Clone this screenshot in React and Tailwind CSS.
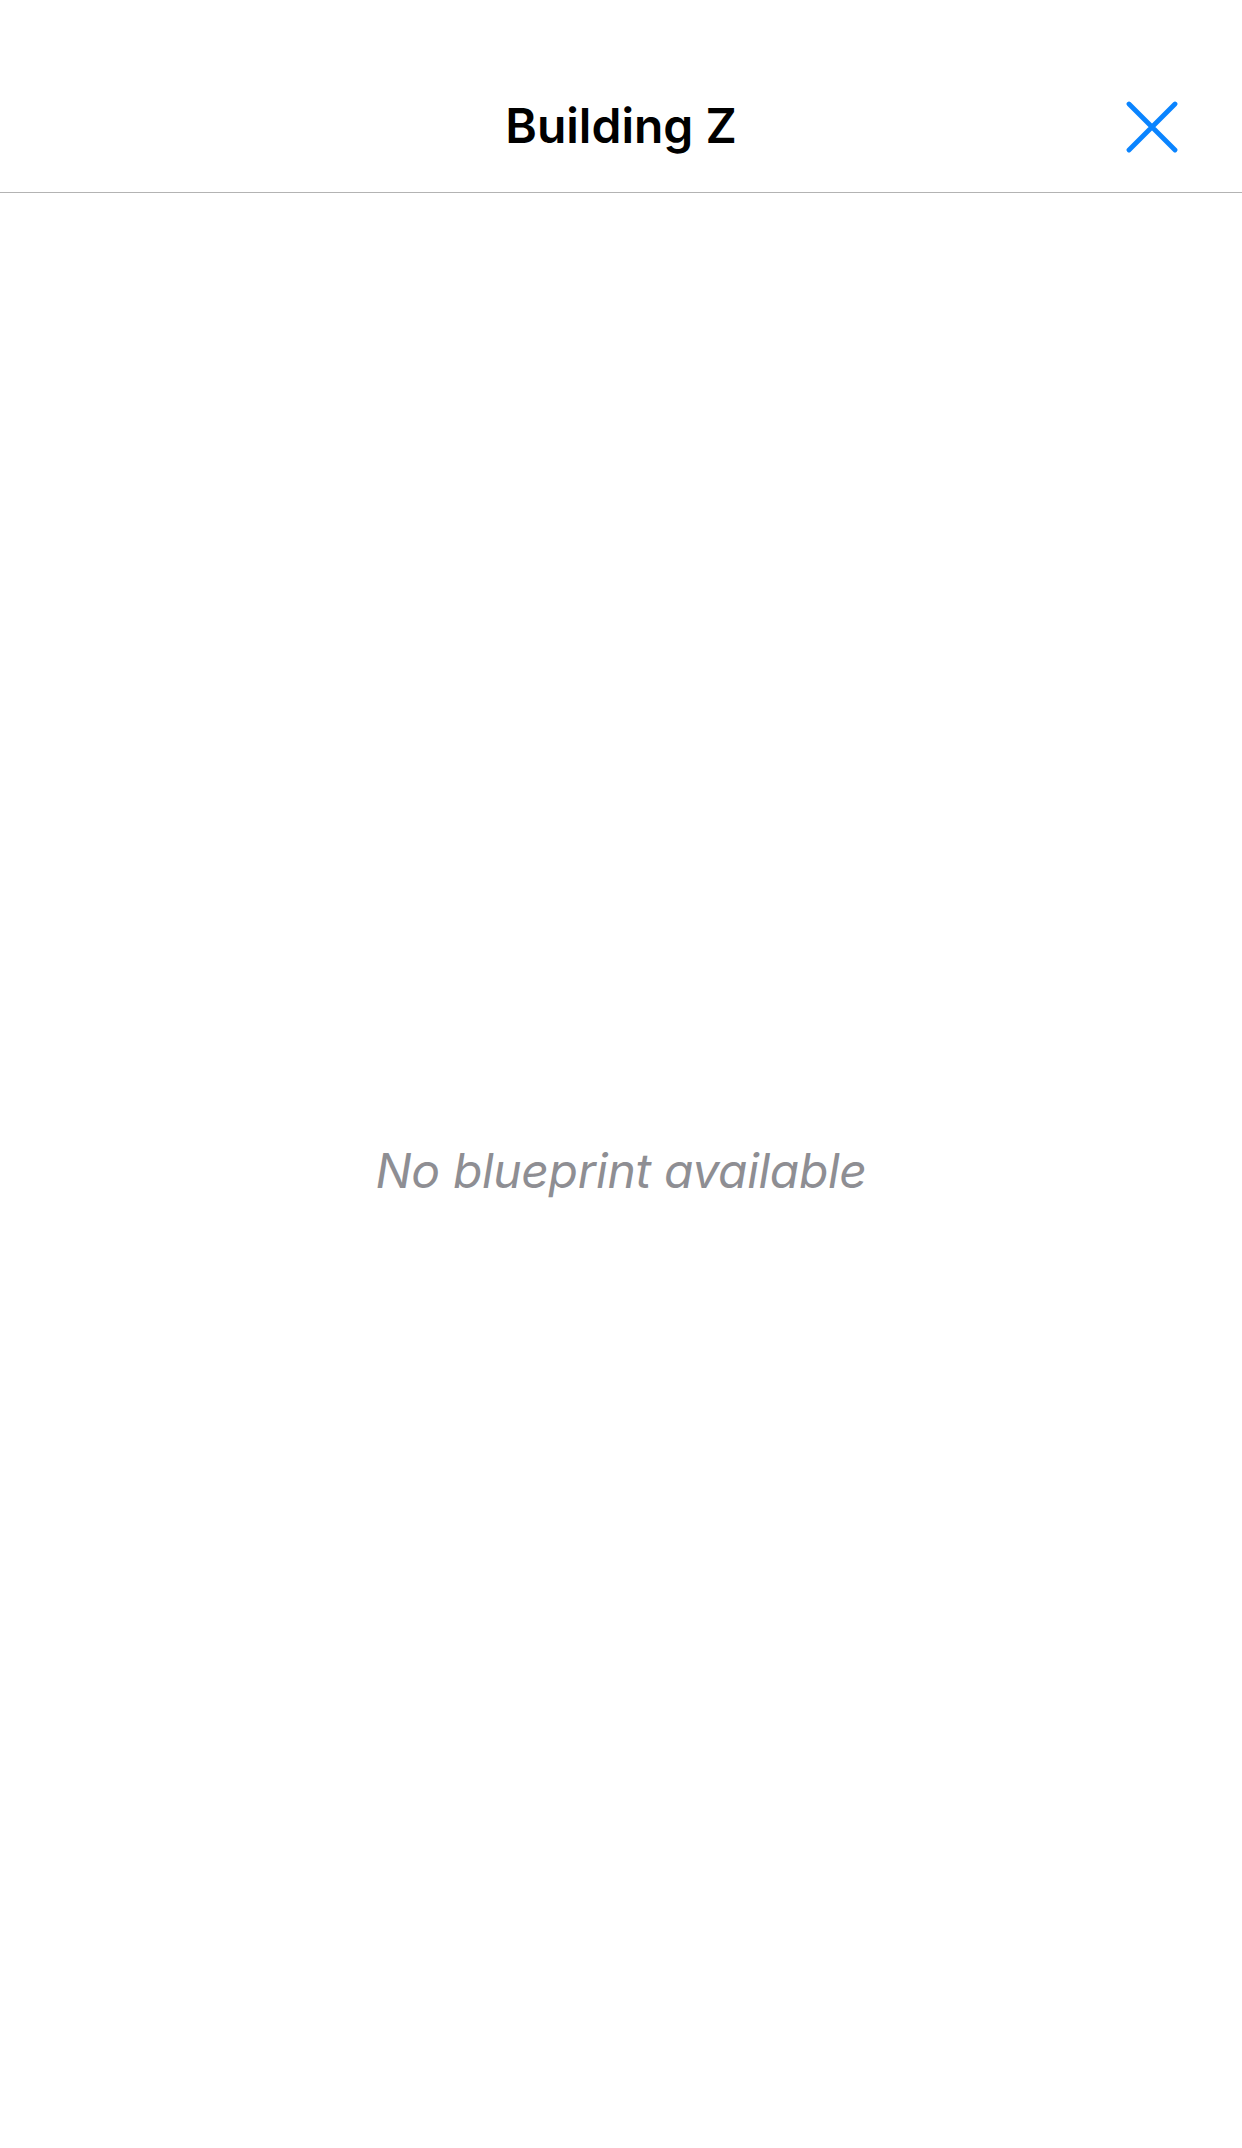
import React from 'react';

// Blueprint viewer modal: header with title + close, empty state body
const App = () => {
  return (
    <div className="w-[1242px] h-[2148px] bg-white flex flex-col font-['Inter',sans-serif]">
      <div className="h-[193px] shrink-0 border-b border-[#b3b3b3] flex items-start pt-[102px] relative">
        <h1 className="flex-1 text-center text-[48px] font-semibold text-black tracking-[0px] leading-[48px]">Building Z</h1>
        <button className="absolute right-[64px] top-[101px] w-[52px] h-[52px] flex items-center justify-center">
          <svg width="52" height="52" viewBox="0 0 52 52" fill="none" stroke="#0a84ff" strokeWidth="4.8" strokeLinecap="round">
            <path d="M3 3 L49 49 M49 3 L3 49" />
          </svg>
        </button>
      </div>
      <div className="flex-1 flex items-center justify-center">
        <p className="text-[48px] italic font-normal text-[#8e8e93] tracking-[-0.35px] leading-none">No blueprint available</p>
      </div>
    </div>
  );
};

export default App;
